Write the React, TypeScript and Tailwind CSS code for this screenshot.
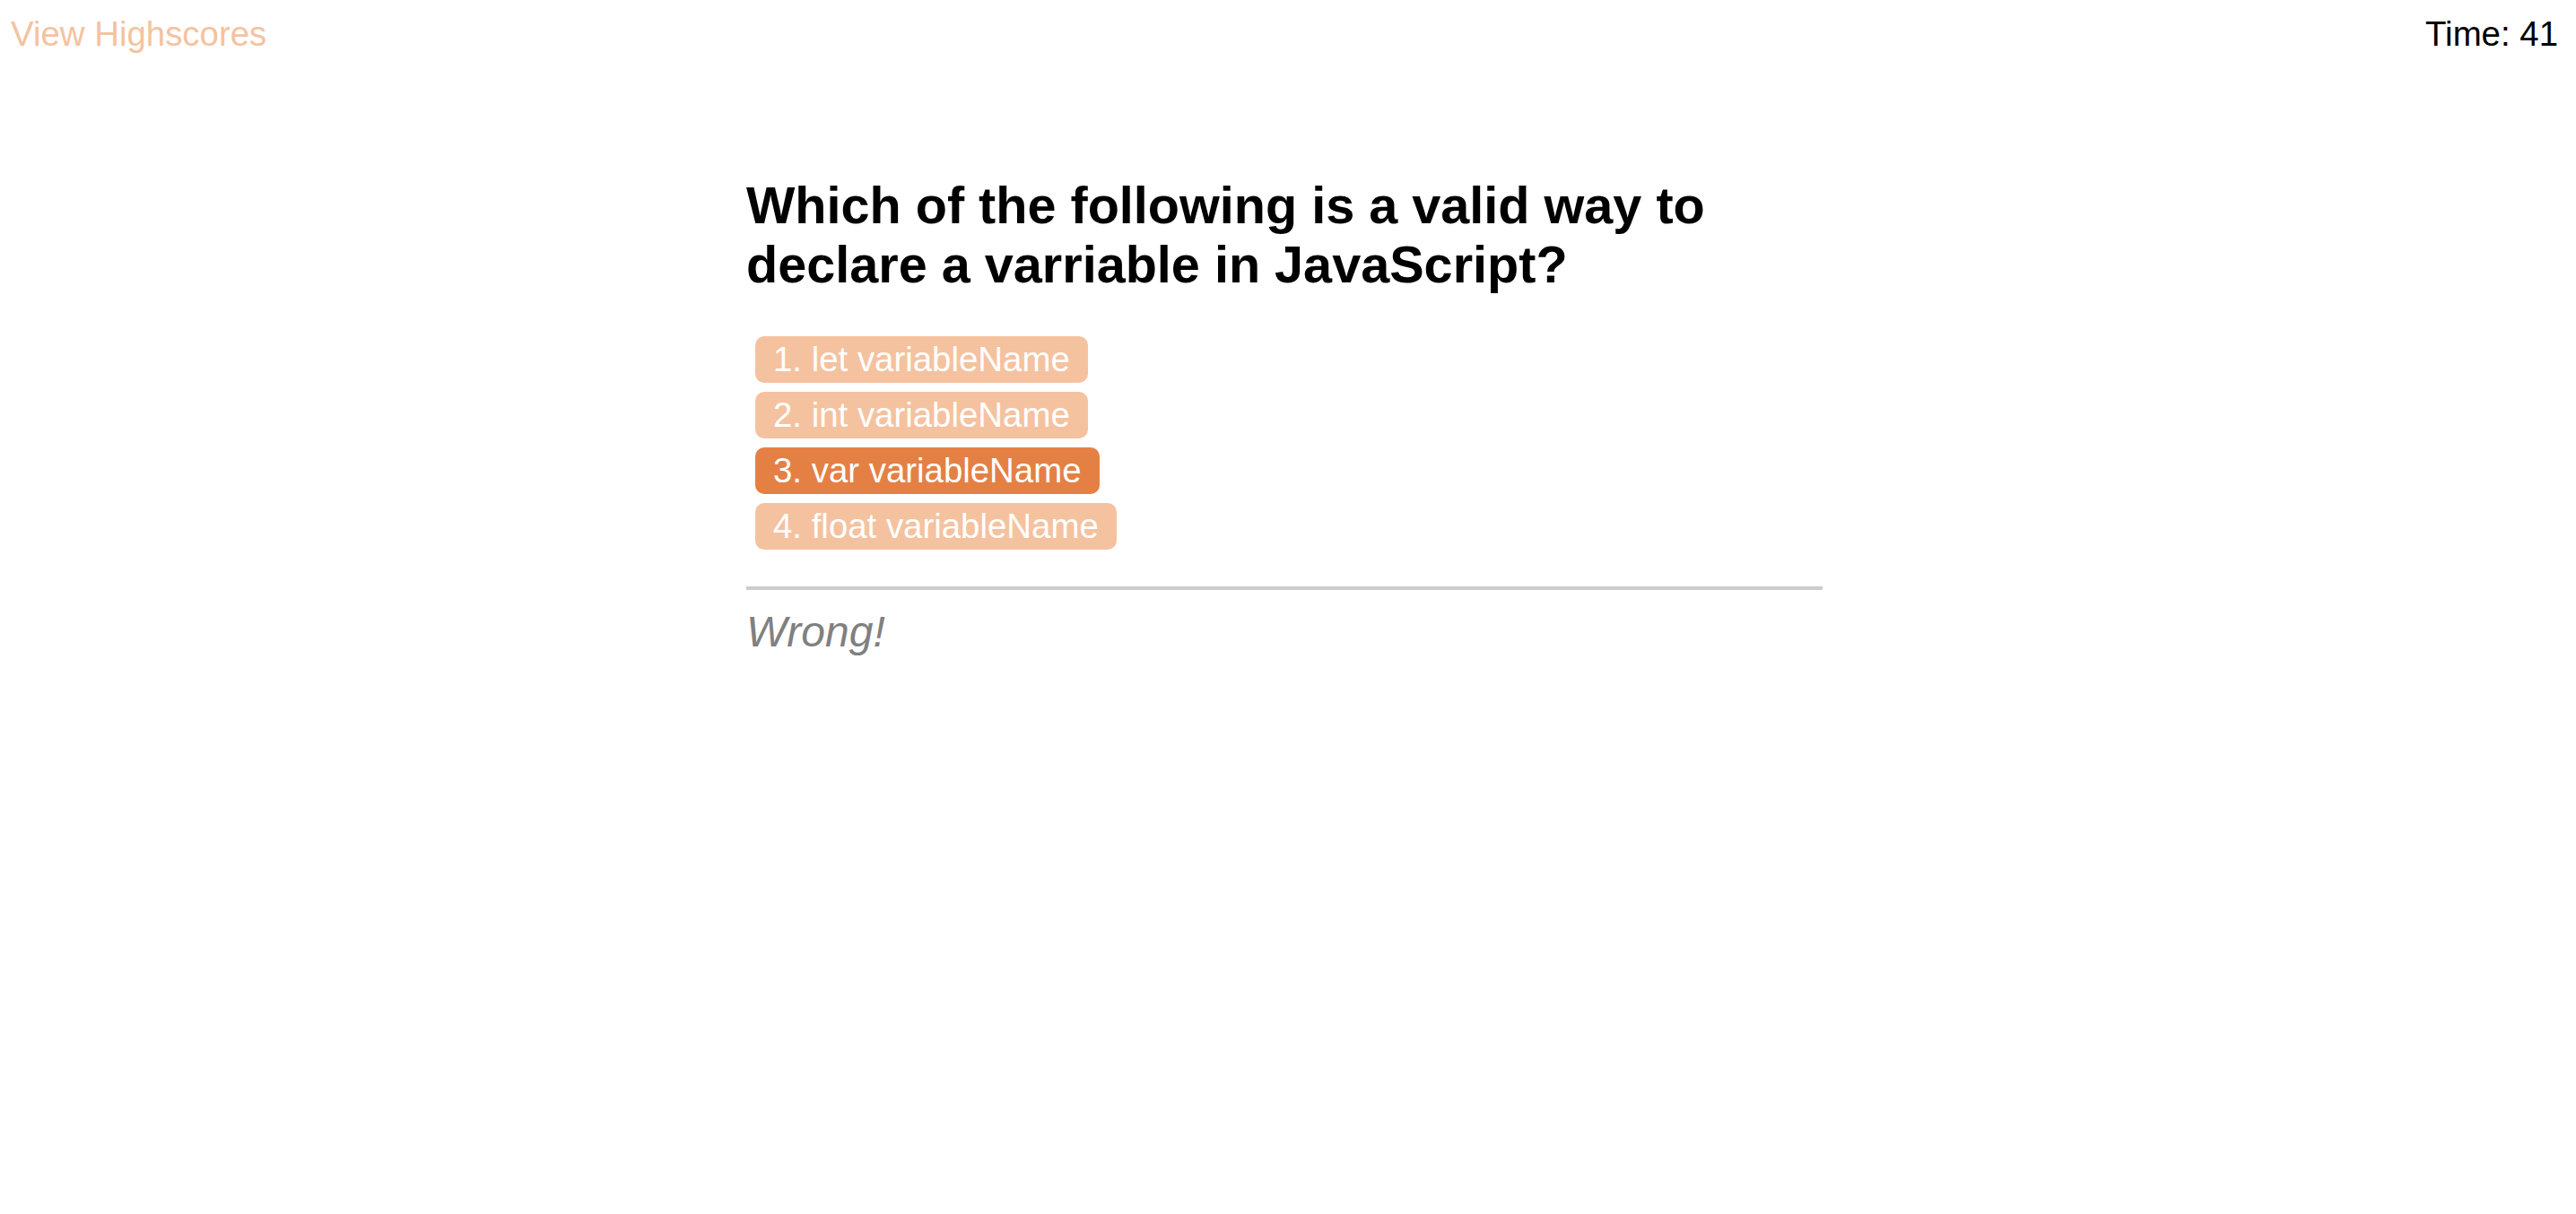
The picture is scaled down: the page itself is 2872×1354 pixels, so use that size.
import React from 'react';

const choices = [
  { id: 1, label: '1. let variableName', active: false },
  { id: 2, label: '2. int variableName', active: false },
  { id: 3, label: '3. var variableName', active: true },
  { id: 4, label: '4. float variableName', active: false },
];

const App = () => {
  return (
    <div className="min-h-screen bg-white text-black leading-[normal] font-['Liberation_Sans',Arial,sans-serif]">
      <header className="flex justify-between items-start pt-4 pl-3 pr-5 text-[38.4px] leading-[normal]">
        <a href="#" className="text-[#f5c2a0]">
          View Highscores
        </a>
        <span>Time: 41</span>
      </header>

      <main className="flex justify-center pr-2 mt-[136px]">
        <div className="w-[1200px]">
          <h1 className="text-[57.6px] font-bold leading-[normal]">
            Which of the following is a valid way to
            <br />
            declare a varriable in JavaScript?
          </h1>

          <div className="mt-[47px] ml-[10px] flex flex-col items-start gap-[10px]">
            {choices.map((c) => (
              <button
                key={c.id}
                className={
                  c.active
                    ? 'h-[52px] px-5 flex items-center rounded-[10px] bg-[#e58044] text-white text-[38.4px] leading-[normal]'
                    : 'h-[52px] px-5 flex items-center rounded-[10px] bg-[#f5c2a0] text-white text-[38.4px] leading-[normal]'
                }
              >
                {c.label}
              </button>
            ))}
          </div>

          <div className="mt-[41px] border-t-4 border-[#cccccc]" />
          <p className="mt-[19px] text-[48px] italic leading-[normal] text-[#808080]">Wrong!</p>
        </div>
      </main>
    </div>
  );
};

export default App;
